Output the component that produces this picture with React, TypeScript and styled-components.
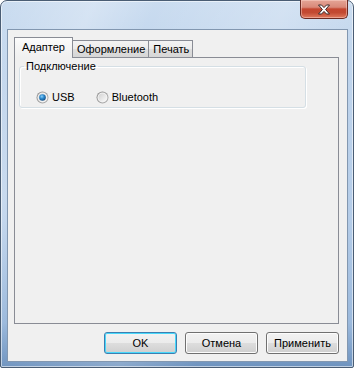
import React from "react";
import styled, { createGlobalStyle } from "styled-components";

const Global = createGlobalStyle`
  html, body { margin: 0; padding: 0; background: #ffffff; }
  body { font-family: "Liberation Sans", Arial, sans-serif; font-size: 11px; color: #000; }
  * { box-sizing: border-box; }
`;

const Window = styled.div`
  width: 354px;
  height: 368px;
  display: flex;
  flex-direction: column;
  border: 1px solid #4a5d74;
  border-radius: 7px 7px 2px 2px;
  padding: 0 5px 5px 6px;
  background:
    linear-gradient(115deg, rgba(255,255,255,0) 0%, rgba(255,255,255,0.25) 18%, rgba(255,255,255,0) 30%, rgba(255,255,255,0.2) 55%, rgba(255,255,255,0) 70%),
    linear-gradient(180deg, #cadcf0 0%, #bfd4ec 20%, #b4cce8 60%, #9bb9dc 88%, #6e93bf 100%);
  box-shadow: inset 0 0 0 1px rgba(255,255,255,0.55);
`;

const TitleBar = styled.div`
  height: 28px;
  flex: none;
  display: flex;
  justify-content: flex-end;
  align-items: flex-start;
`;

const CloseButton = styled.div`
  width: 48px;
  height: 19px;
  margin-top: -1px;
  border: 1px solid #6b2a22;
  border-top: none;
  border-radius: 0 0 5px 5px;
  background: linear-gradient(180deg, #e4a596 0%, #d98979 40%, #c4462f 50%, #c24a32 70%, #e07a5e 100%);
  box-shadow: inset 0 0 0 1px rgba(255,220,210,0.45);
  display: flex;
  align-items: center;
  justify-content: center;
`;

const Client = styled.div`
  flex: 1;
  display: flex;
  flex-direction: column;
  border: 1px solid #8297b0;
  background: #f0f0f0;
  padding: 7px 8px 7px 6px;
`;

const TabStrip = styled.div`
  height: 20px;
  display: flex;
  align-items: flex-end;
  flex: none;
`;

const Tab = styled.div<{ $active?: boolean }>`
  position: relative;
  display: flex;
  align-items: center;
  border: 1px solid #898c95;
  border-bottom: none;
  white-space: nowrap;
  ${(p) =>
    p.$active
      ? `
    z-index: 1;
    height: 21px;
    margin-bottom: -1px;
    padding: 0 7px 3px 7px;
    background: linear-gradient(180deg, #fcfcfc 0%, #f6f6f6 40%, #f0f0f0 100%);
  `
      : `
    height: 17px;
    margin-left: -1px;
    padding: 0 3px 1px 4px;
    background: linear-gradient(180deg, #f3f3f3 0%, #ebebeb 50%, #dedede 51%, #d6d6d6 100%);
    &:nth-child(2) { margin-left: 0; border-left: none; }
  `}
`;

const Panel = styled.div`
  flex: 1;
  border: 1px solid #898c95;
  background: #f0f0f0;
  padding: 2px 32px 0 4px;
`;

const GroupBox = styled.fieldset`
  margin: 0;
  border: 1px solid #d5dfe5;
  border-radius: 3px;
  padding: 0 4px 3px 4px;
  box-shadow: inset 1px 1px 0 #ffffff, 1px 1px 0 #ffffff;
`;

const Legend = styled.legend`
  padding: 0 2px;
  line-height: 13px;
  font-size: 11px;
`;

const RadioRow = styled.div`
  display: flex;
  align-items: center;
  gap: 21px;
  padding: 17px 0 0 12px;
  height: 31px;
`;

const RadioOption = styled.label`
  display: flex;
  align-items: center;
  gap: 3px;
  line-height: 13px;
`;

const ButtonRow = styled.div`
  flex: none;
  display: flex;
  justify-content: flex-end;
  gap: 8px;
  margin-top: 8px;
`;

const Button = styled.div<{ $default?: boolean }>`
  width: 73px;
  height: 22px;
  display: flex;
  align-items: center;
  justify-content: center;
  border-radius: 3px;
  border: 1px solid ${(p) => (p.$default ? "#3c7fb1" : "#707070")};
  background: linear-gradient(180deg, #f2f2f2 0%, #ebebeb 50%, #dddddd 51%, #cfcfcf 100%);
  box-shadow: inset 0 0 0 1px ${(p) => (p.$default ? "#48d8fb" : "#fcfcfc")};
  padding-bottom: 1px;
`;

function Radio({ checked }: { checked?: boolean }) {
  return (
    <svg width="13" height="13" viewBox="0 0 13 13">
      <defs>
        <linearGradient id="rg-ring" x1="0" y1="0" x2="1" y2="1">
          <stop offset="0" stopColor="#8a8a8a" />
          <stop offset="1" stopColor="#b4b4b4" />
        </linearGradient>
        <linearGradient id="rg-in" x1="0" y1="0" x2="1" y2="1">
          <stop offset="0" stopColor="#d2d2d2" />
          <stop offset="1" stopColor="#fafafa" />
        </linearGradient>
        <radialGradient id="rg-dot" cx="0.4" cy="0.35" r="0.7">
          <stop offset="0" stopColor="#8fd0f6" />
          <stop offset="0.45" stopColor="#2c8bd0" />
          <stop offset="1" stopColor="#14497c" />
        </radialGradient>
      </defs>
      <circle cx="6.5" cy="6.5" r="6" fill="url(#rg-ring)" />
      <circle cx="6.5" cy="6.5" r="5" fill="#f4f4f4" />
      <circle cx="6.5" cy="6.5" r="4" fill="url(#rg-in)" />
      {checked && <circle cx="6.5" cy="6.5" r="3.3" fill="url(#rg-dot)" />}
    </svg>
  );
}

function CloseGlyph() {
  return (
    <svg width="14" height="11" viewBox="0 0 14 11">
      <path
        d="M1.5 1 L4.5 1 L7 3.6 L9.5 1 L12.5 1 L8.6 5.5 L12.5 10 L9.5 10 L7 7.4 L4.5 10 L1.5 10 L5.4 5.5 Z"
        fill="#ffffff"
        stroke="#3b2a2a"
        strokeWidth="1"
        strokeLinejoin="round"
      />
    </svg>
  );
}

export default function App() {
  return (
    <>
      <Global />
      <Window>
        <TitleBar>
          <CloseButton>
            <CloseGlyph />
          </CloseButton>
        </TitleBar>
        <Client>
          <TabStrip>
            <Tab $active>Адаптер</Tab>
            <Tab>Оформление</Tab>
            <Tab>Печать</Tab>
          </TabStrip>
          <Panel>
            <GroupBox>
              <Legend>Подключение</Legend>
              <RadioRow>
                <RadioOption>
                  <Radio checked />
                  USB
                </RadioOption>
                <RadioOption>
                  <Radio />
                  Bluetooth
                </RadioOption>
              </RadioRow>
            </GroupBox>
          </Panel>
          <ButtonRow>
            <Button $default>OK</Button>
            <Button>Отмена</Button>
            <Button>Применить</Button>
          </ButtonRow>
        </Client>
      </Window>
    </>
  );
}
